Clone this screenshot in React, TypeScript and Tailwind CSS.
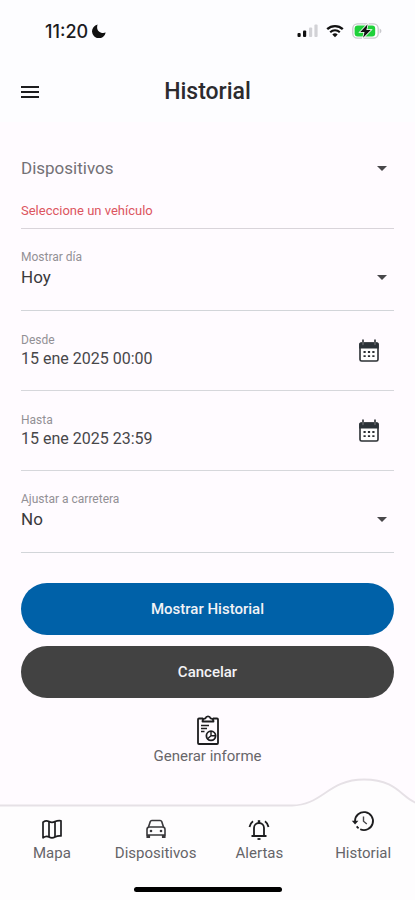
import { useState } from "react";
import type { ReactNode } from "react";
import { MdArrowDropDown, MdMenu } from "react-icons/md";

const StatusBar = () => (
  <div className="flex h-[62px] items-center justify-between pl-[45px] pr-[33px] font-['Inter',sans-serif]">
    <div className="flex items-center gap-1 text-[18px] font-medium text-[#1c1c1e]">
      <span>11:20</span>
      <svg viewBox="0 0 14 14" className="size-3.5" fill="#111">
        <path d="M5.600.6C4.700 3.200 5.100 5.600 6.700 7.200c1.700 1.700 4.300 2.200 7 1.400A6.900 6.900 0 1 1 5.600.6Z" />
      </svg>
    </div>
    <div className="flex items-center gap-2">
      <svg viewBox="0 0 21 14" className="h-3.5 w-[21px]">
        <rect x="0.5" y="9" width="3.2" height="4" rx="1" fill="#111" />
        <rect x="6" y="6.5" width="3.2" height="6.5" rx="1" fill="#111" />
        <rect x="12" y="3.5" width="3.2" height="9.5" rx="1" fill="#d2d2d6" />
        <rect x="17.4" y="0.5" width="3.2" height="12.5" rx="1" fill="#d2d2d6" />
      </svg>
      <svg viewBox="0 0 18 14" className="h-3.5 w-[18px]" fill="none" stroke="#111">
        <path d="M1.2 5.2a11.2 11.2 0 0 1 15.6 0" strokeWidth="2.3" />
        <path d="M4.2 8.2a7 7 0 0 1 9.6 0" strokeWidth="2.1" />
        <path d="M9 13.2 6.3 10.5a4 4 0 0 1 5.4 0Z" fill="#111" stroke="none" />
      </svg>
      <svg viewBox="0 0 30 16" className="h-4 w-[30px]">
        <rect x="0.8" y="0.8" width="25.4" height="14.4" rx="4.6" fill="#fff" stroke="#c9c9cd" strokeWidth="1.3" />
        <rect x="2.6" y="2.6" width="20.6" height="10.8" rx="3" fill="#1fd13a" />
        <path d="M27.6 5.6v4.8c1.2-.4 1.8-1.3 1.8-2.4s-.6-2-1.8-2.4Z" fill="#c9c9cd" />
        <path
          d="M15.6 1.2 8.2 9h4.3l-1.4 5.8L18.8 7h-4.4Z"
          fill="#111"
          stroke="#fff"
          strokeWidth="1.6"
          paintOrder="stroke"
        />
      </svg>
    </div>
  </div>
);

const CalendarIcon = () => (
  <svg viewBox="0 0 22 24" className="h-6 w-[22px]">
    <rect x="2" y="4" width="18" height="18" rx="1.6" fill="#fff" stroke="#2b2f33" strokeWidth="1.6" />
    <path d="M1.2 5a1.6 1.6 0 0 1 1.6-1.6h16.4A1.6 1.6 0 0 1 20.8 5v4.6H1.2Z" fill="#2b3238" />
    <path d="M5 1.2v4M17 1.2v4" stroke="#55595d" strokeWidth="2" strokeLinecap="round" />
    <path
      d="M5.5 13h2.2M9.9 13h2.2M14.3 13h2.2M5.5 17.2h2.2M9.9 17.2h2.2M14.3 17.2h2.2"
      stroke="#2b2f33"
      strokeWidth="1.8"
    />
  </svg>
);

const ReportIcon = () => (
  <svg viewBox="0 0 24 32" className="h-8 w-6" fill="none" stroke="#1d1d1f" strokeWidth="1.8">
    <path d="M7 4.5H3a1 1 0 0 0-1 1V29a1 1 0 0 0 1 1h18a1 1 0 0 0 1-1V5.500a1 1 0 0 0-1-1h-4" />
    <path d="M6.5 7.5c0-2.2 1-3.2 3-3.2a2.6 2.6 0 0 1 5 0c2 0 3 1 3 3.2Z" strokeLinejoin="round" />
    <path d="M5 11.5h8M5 14.5h6M5 17.500h3.500" strokeWidth="1.4" />
    <circle cx="15" cy="21.8" r="4.6" />
    <path d="M15 17v4.800h4.800M15 21.800l-3.400 3" strokeWidth="1.4" />
  </svg>
);

const MapIcon = () => (
  <svg viewBox="0 0 24 24" className="size-6" fill="none" stroke="#1d1d1f" strokeLinejoin="round">
    <path
      d="M3 5.2c2-1.400 4-1.700 6-.7 2 1.300 4 1.300 6 0 2-.8 4-.9 6-.7V19c-2-.4-4 0-6 1-2 1.200-4 1.200-6 0-2-1-4-.6-6 .8Z"
      strokeWidth="1.7"
    />
    <path d="M9 4.500V20M15 4.500V20" strokeWidth="1.7" />
  </svg>
);

const CarIcon = () => (
  <svg viewBox="0 0 24 24" className="size-6" fill="none" stroke="#39383b" strokeLinejoin="round">
    <path d="M4.500 10 6.300 4.500Q6.700 3.500 7.800 3.500h8.400q1.100 0 1.500 1L19.500 10" strokeWidth="1.6" />
    <path d="M3 18v-5.500Q3 10 5.500 10h13q2.500 0 2.500 2.500V18Z" strokeWidth="1.6" />
    <path d="M3 18v2.500h2.500V18M18.500 18v2.500H21V18" fill="#39383b" strokeWidth="1.2" />
    <circle cx="7" cy="14" r="1.3" fill="#39383b" stroke="none" />
    <circle cx="17" cy="14" r="1.3" fill="#39383b" stroke="none" />
  </svg>
);

const AlertIcon = () => (
  <svg viewBox="0 0 24 24" className="size-6" fill="none" stroke="#1d1d1f" strokeWidth="1.8">
    <path d="M4.500 19h15M7 19v-8a5 5 0 0 1 10 0v8" />
    <path d="M12 3.200V6" strokeWidth="2.4" />
    <path d="M10.500 22h3" />
    <path d="M6 4.300A9 9 0 0 0 2.500 10M18 4.300a9 9 0 0 1 3.500 5.700" />
  </svg>
);

const HistoryIcon = () => (
  <svg viewBox="0 0 24 24" className="size-6" fill="none" stroke="#1d1d1f" strokeWidth="1.8">
    <path d="M4 12a9 9 0 1 1 5.200 8.200" />
    <path d="M7.600 19.300a9 9 0 0 1-1.900-1.900" />
    <path d="M.8 11.800h6.600L4.100 15.500Z" fill="#1d1d1f" stroke="none" />
    <path d="M12.500 7.500v4.700l3.300 2.800" stroke="#48474a" strokeWidth="1.4" />
  </svg>
);

type SelectFieldProps = {
  id: string;
  label: string;
  options: string[];
};

const SelectField = ({ id, label, options }: SelectFieldProps) => (
  <div className="border-b border-[#d2d5d9] pt-5 pb-[21px]">
    <label htmlFor={id} className="block text-[12px] leading-4 text-[#929095]">
      {label}
    </label>
    <div className="relative">
      <select
        id={id}
        className="block h-6 w-full appearance-none bg-transparent text-[17px] text-[#3a393c] outline-none"
      >
        {options.map(option => (
          <option key={option}>{option}</option>
        ))}
      </select>
      <MdArrowDropDown className="pointer-events-none absolute top-0 right-0 size-6 text-[#48474a]" />
    </div>
  </div>
);

type DateFieldProps = {
  id: string;
  label: string;
  value: string;
  onChange: (value: string) => void;
};

const DateField = ({ id, label, value, onChange }: DateFieldProps) => (
  <div className="flex items-start border-b border-[#d6d7db] pt-[21px] pb-5">
    <div className="min-w-0 flex-1">
      <label htmlFor={id} className="block text-[12px] leading-4 text-[#929095]">
        {label}
      </label>
      <input
        id={id}
        type="text"
        value={value}
        onChange={event => onChange(event.target.value)}
        className="block h-[22px] w-full bg-transparent text-[16px] text-[#48474a] outline-none"
      />
    </div>
    <button type="button" aria-label={`Elegir fecha: ${label}`} className="mt-[7px] mr-3.5">
      <CalendarIcon />
    </button>
  </div>
);

type TabProps = {
  label: string;
  icon: ReactNode;
  active?: boolean;
};

const Tab = ({ label, icon, active = false }: TabProps) => (
  <a
    href="#"
    aria-current={active ? "page" : undefined}
    className="flex h-[46px] flex-col items-center justify-between text-[15px] leading-5 text-[#656468]"
  >
    <span className={active ? "-mt-2" : ""}>{icon}</span>
    {label}
  </a>
);

function App() {
  const [from, setFrom] = useState<string>("15 ene 2025 00:00");
  const [to, setTo] = useState<string>("15 ene 2025 23:59");

  return (
    <div className="flex min-h-screen flex-col bg-[#fffbff] font-['Roboto',sans-serif]">
      <header className="bg-[#fdfdff]">
        <StatusBar />
        <div className="grid h-[60px] grid-cols-[24px_1fr_24px] items-center px-[18px]">
          <button type="button" aria-label="Menú">
            <MdMenu className="size-6 text-[#1d1d1f]" />
          </button>
          <h1 className="text-center text-[23px] leading-7 font-medium text-[#2c2b2e]">Historial</h1>
        </div>
      </header>

      <main className="px-[21px]">
        <div className="border-b border-[#d9d4da] pt-[34px] pb-[9px]">
          <div className="relative">
            <select
              aria-label="Dispositivos"
              aria-describedby="device-error"
              className="block h-6 w-full appearance-none bg-transparent text-[17px] text-[#737176] outline-none"
            >
              <option>Dispositivos</option>
            </select>
            <MdArrowDropDown className="pointer-events-none absolute top-0 right-0 size-6 text-[#48474a]" />
          </div>
          <p id="device-error" className="mt-[23px] text-[13px] leading-4 text-[#dc5560]">
            Seleccione un vehículo
          </p>
        </div>
        <SelectField id="day" label="Mostrar día" options={["Hoy", "Ayer"]} />
        <DateField id="from" label="Desde" value={from} onChange={setFrom} />
        <DateField id="to" label="Hasta" value={to} onChange={setTo} />
        <SelectField id="snap" label="Ajustar a carretera" options={["No", "Sí"]} />

        <div className="mt-[30px] flex flex-col gap-[11px] text-[15px] font-medium text-[#f3f3f6]">
          <button type="button" className="h-[52px] rounded-full bg-[#0061a8]">
            Mostrar Historial
          </button>
          <button type="button" className="h-[52px] rounded-full bg-[#424242]">
            Cancelar
          </button>
        </div>

        <button
          type="button"
          className="mx-auto mt-4 flex flex-col items-center text-[15px] leading-5 text-[#68666a]"
        >
          <ReportIcon />
          Generar informe
        </button>
      </main>

      <nav className="relative mt-auto pt-10">
        <svg
          viewBox="0 0 415 123"
          preserveAspectRatio="none"
          className="absolute inset-0 size-full"
          fill="#fefdfe"
          stroke="#e6e1e6"
          strokeWidth="1.8"
        >
          <path d="M-2 28.500H292C322 28.500 328 2.500 364 2.500S402 24 420 27V126H-2Z" />
        </svg>
        <div className="relative grid grid-cols-4">
          <Tab label="Mapa" icon={<MapIcon />} />
          <Tab label="Dispositivos" icon={<CarIcon />} />
          <Tab label="Alertas" icon={<AlertIcon />} />
          <Tab label="Historial" icon={<HistoryIcon />} active />
        </div>
        <div className="relative mx-auto mt-6 mb-2 h-[5px] w-[148px] rounded-full bg-black" />
      </nav>
    </div>
  );
}

export default App;
